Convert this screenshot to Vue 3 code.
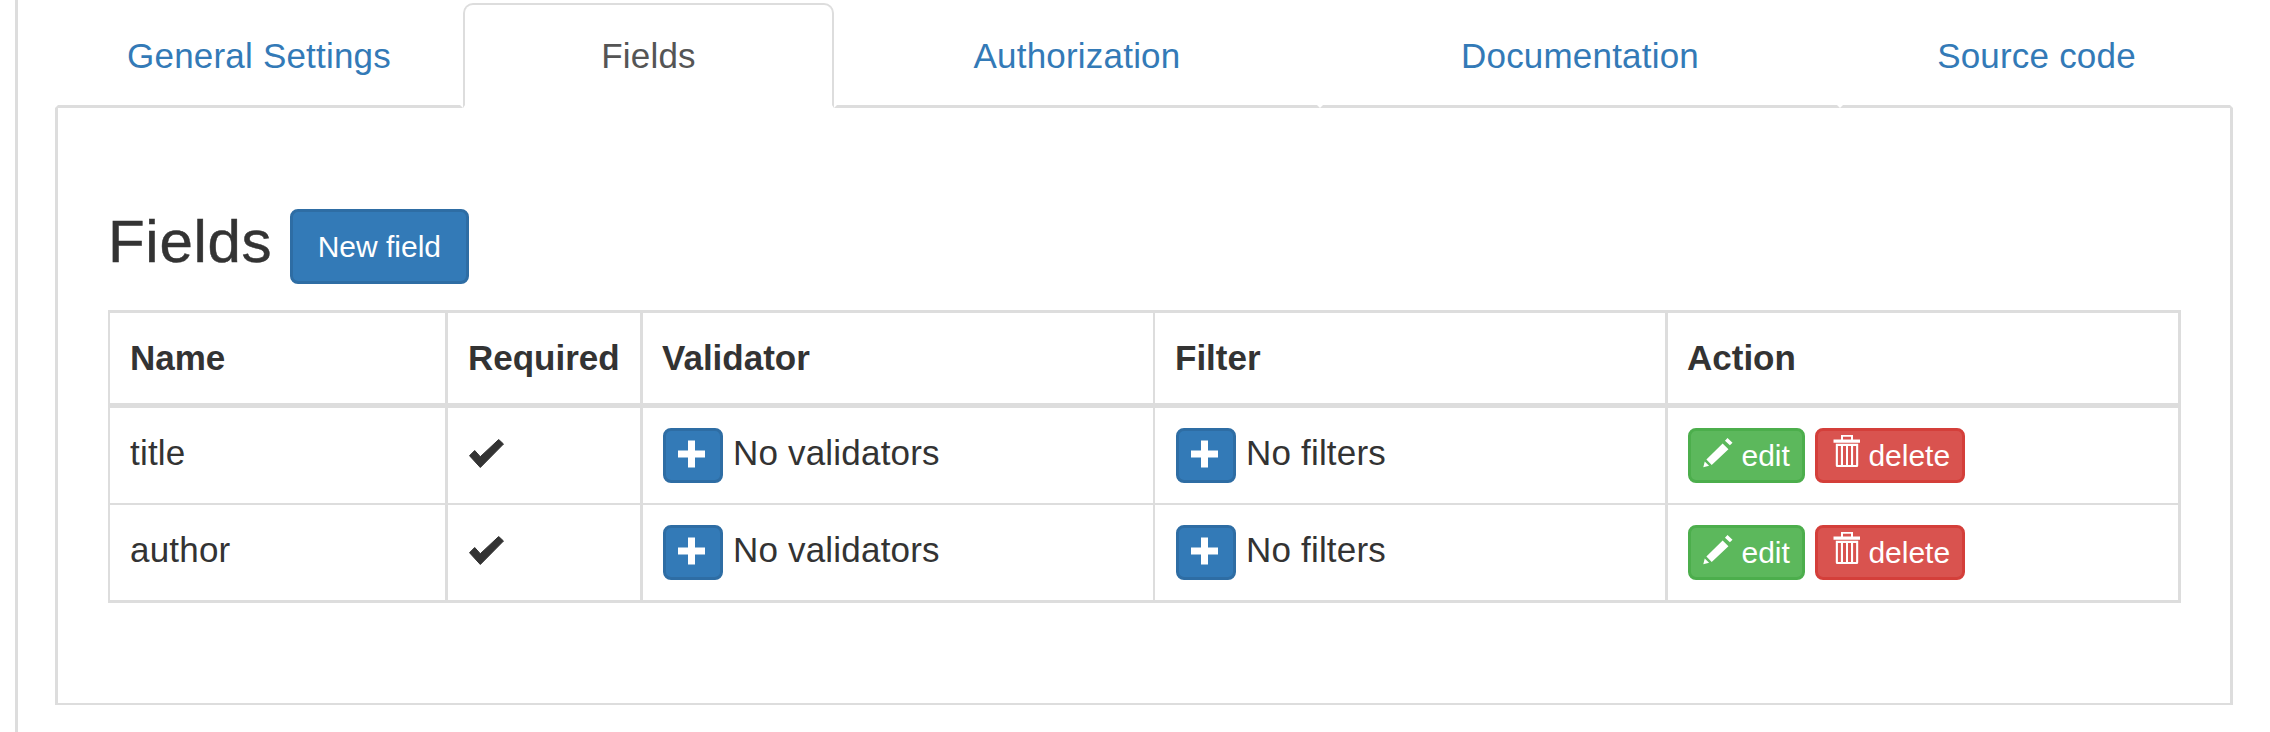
<script setup>
const tabs = [
  { label: 'General Settings', active: false },
  { label: 'Fields', active: true },
  { label: 'Authorization', active: false },
  { label: 'Documentation', active: false },
  { label: 'Source code', active: false },
]
const rows = [
  { name: 'title' },
  { name: 'author' },
]
</script>

<template>
  <div class="page">
    <ul class="tabs">
      <li v-for="t in tabs" :key="t.label" class="tab" :class="{ active: t.active }">{{ t.label }}</li>
    </ul>
    <div class="panel">
      <h3 class="title">Fields <span class="btn btn-primary btn-sm">New field</span></h3>
      <table class="grid">
        <colgroup>
          <col class="c1" /><col class="c2" /><col class="c3" /><col class="c4" /><col class="c5" />
        </colgroup>
        <thead>
          <tr>
            <th>Name</th>
            <th>Required</th>
            <th>Validator</th>
            <th>Filter</th>
            <th>Action</th>
          </tr>
        </thead>
        <tbody>
          <tr v-for="r in rows" :key="r.name">
            <td>{{ r.name }}</td>
            <td>
              <svg class="check" viewBox="0 0 35 29" width="35" height="29">
                <polygon points="0.5,16.7 5.7,11.5 11.3,17.7 29.7,0.5 34.5,5 11.3,28.5" fill="#333" stroke="#333" stroke-width="1" stroke-linejoin="round" />
              </svg>
            </td>
            <td>
              <span class="btn btn-primary btn-xs plus">
                <svg viewBox="0 0 30 30" width="30" height="30"><path d="M10 1.500h7v10h10v7h-10v10h-7v-10h-10v-7h10z" fill="#fff" /></svg>
              </span>
              No validators
            </td>
            <td>
              <span class="btn btn-primary btn-xs plus">
                <svg viewBox="0 0 30 30" width="30" height="30"><path d="M10 1.500h7v10h10v7h-10v10h-7v-10h-10v-7h10z" fill="#fff" /></svg>
              </span>
              No filters
            </td>
            <td class="actions">
              <span class="btn btn-success btn-xs">
                <svg class="pencil" viewBox="0 0 31 31" width="30" height="30">
                  <path d="M0.300 30.300 1.800 24.400 6.300 28.800Z M3.500 22.200 20.300 5.800 26.300 11.600 9 27.800Z M22.700 2.800 25.300 0 30.500 4.800 27.800 7.600Z" fill="#fff" />
                </svg>
                edit
              </span>
              <span class="btn btn-danger btn-xs">
                <svg class="trash" viewBox="-3.500 0 30 32" width="30" height="32">
                  <path fill="#fff" fill-rule="evenodd" d="M7.500 0h12v4.500h7.300v3.300H0V4.500h7.500zM9.500 1.800v2.700h8V1.800zM2.300 8.800h22.400V30.500a1.500 1.500 0 0 1-1.500 1.500H3.800a1.500 1.500 0 0 1-1.500-1.500zM4.400 11v19h3V11zM9.500 11v19h3V11zM14.500 11v19h3V11zM19.600 11v19h3V11z" />
                </svg>
                delete
              </span>
            </td>
          </tr>
        </tbody>
      </table>
    </div>
  </div>
</template>

<style>
html, body { margin: 0; background: #fff; }
</style>

<style scoped>
.page {
  box-sizing: border-box;
  width: 2255px;
  height: 732px;
  overflow: hidden;
  margin-left: 15px;
  border-left: 3px solid #ddd;
  padding: 3px 37px 0 37px;
  font-family: "Liberation Sans", Arial, sans-serif;
  font-size: 35px;
  line-height: 50px;
  color: #333;
}
.tabs {
  list-style: none;
  margin: 0;
  padding: 0;
  display: grid;
  grid-template-columns: 408px 371px 486px 520px 393px;
}
.tab {
  box-sizing: border-box;
  height: 105px;
  padding: 25px 15px 24px;
  text-align: center;
  letter-spacing: 0.2px;
  color: #337ab7;
  border: 3px solid transparent;
  border-bottom-color: #ddd;
  border-radius: 10px 10px 0 0;
}
.tab.active {
  color: #555;
  padding-top: 26px;
  border-color: #ddd #ddd #fff;
  border-width: 2px 2px 3px;
}
.panel {
  border: 3px solid #ddd;
  border-top: 0;
  border-bottom-width: 2px;
  padding: 50px 49px 100px 50px;
}
.title {
  margin: 51px 0 26px;
  font-size: 60px;
  font-weight: 500;
  line-height: 66px;
  letter-spacing: 0.7px;
  -webkit-text-stroke: 0.5px #333;
}
.btn {
  display: inline-block;
  box-sizing: border-box;
  vertical-align: middle;
  text-align: center;
  white-space: nowrap;
  font-weight: 400;
  font-size: 30px;
  line-height: 45px;
  letter-spacing: 0;
  -webkit-text-stroke: 0;
  color: #fff;
  border: 3px solid transparent;
  border-radius: 8px;
}
.btn-sm { padding: 12px 25px; }
.btn-xs {
  display: inline-flex;
  align-items: center;
  gap: 8.500px;
  height: 55px;
  padding: 2px 12px;
}
.btn-primary { background: #337ab7; border-color: #2e6da4; }
.btn-success { background: #5cb85c; border-color: #4cae4c; }
.btn-danger { background: #d9534f; border-color: #d43f3a; margin-left: 10px; }
.grid {
  table-layout: fixed;
  width: 2073px;
  border-collapse: separate;
  border-spacing: 0;
  border-top: 3px solid #ddd;
}
.c1 { width: 340px; }
.c2 { width: 195px; }
.c3 { width: 512px; }
.c4 { width: 513px; }
.c5 { width: 513px; }
th, td {
  box-sizing: border-box;
  padding: 20px;
  text-align: left;
  vertical-align: top;
  border-right: 3px solid #ddd;
}
th:first-child, td:first-child { border-left: 2px solid #ddd; }
th:nth-child(3), td:nth-child(3) { border-right-width: 2px; }
th:nth-child(4), td:nth-child(4) { padding-left: 21px; }
th:nth-child(n+3) { text-indent: -1px; }
th { font-weight: 700; height: 95px; border-bottom: 5px solid #ddd; }
td { height: 97px; border-bottom: 2px solid #ddd; white-space: nowrap; letter-spacing: 0.2px; }
tr:last-child td { height: 98px; border-bottom-width: 3px; }
td .btn { letter-spacing: 0; margin-top: -1px; }
.check { display: block; margin: 10.500px 0 0 1px; }
.plus { gap: 0; }
.plus svg { margin-bottom: 3px; }
.pencil { margin-bottom: 5px; }
.trash { margin-bottom: 8.400px; }
</style>
